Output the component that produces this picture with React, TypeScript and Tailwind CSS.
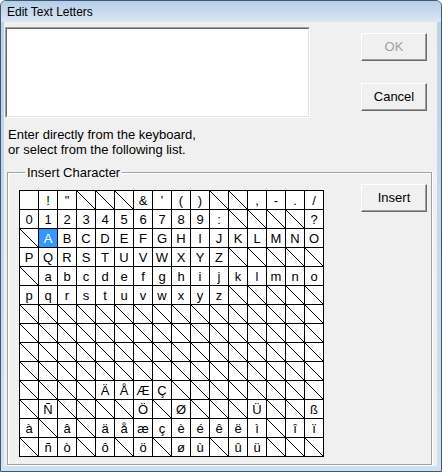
import React from "react";

// '#' = character not available (crossed cell), ' ' = blank cell
const rows = [
  " !\"###&'()##,-./",
  "0123456789:####?",
  "#ABCDEFGHIJKLMNO",
  "PQRSTUVWXYZ#####",
  "#abcdefghijklmno",
  "pqrstuvwxyz#####",
  "################",
  "################",
  "################",
  "################",
  "####ÄÅÆÇ########",
  "#Ñ####Ö#Ø###Ü##ß",
  "à#â#äåæçèéêëì#îï",
  "#ñò#ô#ö#øù#ûü###",
];

const Cross = () => (
  <svg width="18" height="18" viewBox="0 0 18 18" className="block">
    <line x1="0" y1="0" x2="18" y2="18" stroke="#000" strokeWidth="1" />
  </svg>
);

const Button = ({ label, disabled = false }: { label: string; disabled?: boolean }) => (
  <div
    className={`w-[66px] h-[28px] flex items-center justify-center bg-[#f0f0f0] border border-t-white border-l-white border-r-[#696969] border-b-[#696969] shadow-[inset_-1px_-1px_0_#a0a0a0] text-[13px] ${
      disabled ? "text-[#a0a0a0]" : "text-black"
    }`}
  >
    {label}
  </div>
);

export default function App() {
  return (
    <div className="w-[442px] h-[472px] flex flex-col bg-gradient-to-b from-[#bcd2e9] to-[#cfe0f1] border border-[#3d5a72] rounded-t-[6px] font-['Liberation_Sans',Arial,sans-serif] text-black overflow-hidden">
      {/* title bar */}
      <div className="h-[21px] flex items-center pl-[6px] text-[12px] bg-gradient-to-b from-[#b5cee8] to-[#dae6f3]">
        Edit Text Letters
      </div>

      {/* dialog body */}
      <div className="flex-1 ml-[3px] mr-[4px] mb-[5px] bg-[#f0f0f0] flex flex-col">
        {/* upper part */}
        <div className="flex items-start">
          <div className="ml-[1px] mt-[5px] w-[305px] h-[91px] border border-t-[#a0a0a0] border-l-[#a0a0a0] border-r-white border-b-white">
            <div className="w-full h-full bg-white border border-t-[#696969] border-l-[#696969] border-r-[#e3e3e3] border-b-[#e3e3e3]" />
          </div>
          <div className="ml-[51px] mt-[11px] flex flex-col gap-[22px]">
            <Button label="OK" disabled />
            <Button label="Cancel" />
          </div>
        </div>

        <p className="ml-[4px] mt-[9px] text-[13px] leading-[15px]">
          Enter directly from the keyboard,
          <br />
          or select from the following list.
        </p>

        {/* Insert Character group */}
        <fieldset className="ml-[3px] mt-[8px] w-[425px] h-[300px] border border-[#a0a0a0] shadow-[inset_1px_1px_0_#fff,1px_1px_0_#fff] pl-[11px] pr-[4px]">
          <legend className="ml-[6px] px-[2px] text-[13px] leading-[15px]">Insert Character</legend>
          <div className="flex items-start justify-between">
            <div className="mt-[10px] grid grid-cols-[repeat(16,18px)] auto-rows-[18px] gap-px p-px bg-black">
              {rows.map((row, r) =>
                Array.from(row).map((ch, c) => {
                  const selected = r === 2 && c === 1;
                  return (
                    <div
                      key={`${r}-${c}`}
                      className={`flex items-center justify-center text-[13px] leading-none ${
                        selected ? "bg-[#3399ff] text-white" : "bg-white text-black"
                      }`}
                    >
                      {ch === "#" ? <Cross /> : ch}
                    </div>
                  );
                })
              )}
            </div>
            <div className="mt-[4px]">
              <Button label="Insert" />
            </div>
          </div>
        </fieldset>
      </div>
    </div>
  );
}
